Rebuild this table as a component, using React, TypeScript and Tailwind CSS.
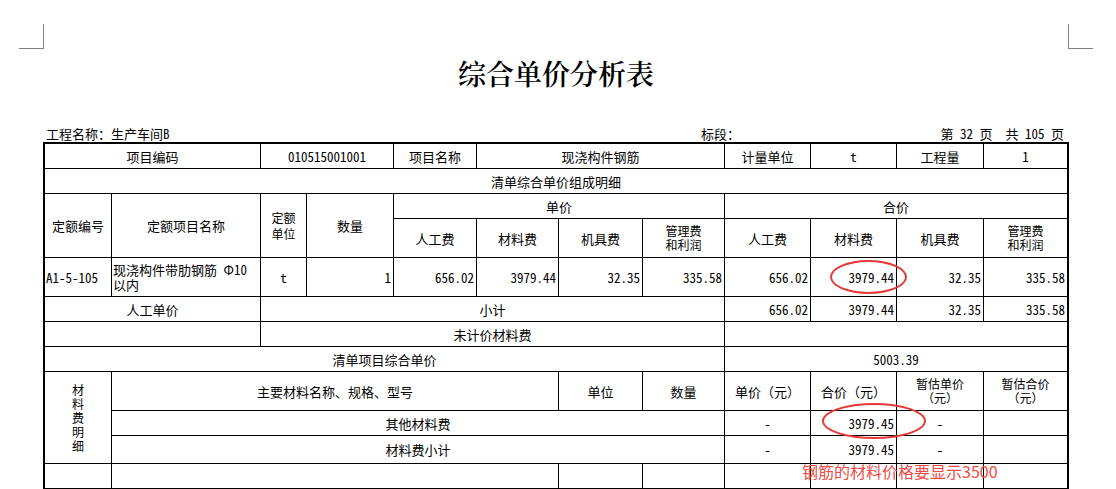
import type { ReactNode } from 'react';

const song = "font-['Noto_Sans_Mono_CJK_SC','Noto_Sans_CJK_SC',monospace]";

type Align = 'c' | 'r' | 'l';

function C({ children, a = 'c', cls = '' }: { children?: ReactNode; a?: Align; cls?: string }) {
	const al =
		a === 'r'
			? 'justify-end pr-[2px] text-right'
			: a === 'l'
				? 'justify-start pl-[1px] text-left'
				: 'justify-center text-center';
	return <div className={`flex items-center bg-white ${al} ${cls}`}>{children}</div>;
}

// two stacked lines, kept a touch smaller so the rows don't touch
function Two({ top, bottom, gap = 'leading-[14px]' }: { top: string; bottom: string; gap?: string }) {
	return (
		<div className={`flex flex-col items-center text-[12px] ${gap}`}>
			<span>{top}</span>
			<span>{bottom}</span>
		</div>
	);
}

const feeHeads = (
	<>
		<C>人工费</C>
		<C>材料费</C>
		<C>机具费</C>
		<C>
			<Two top="管理费" bottom="和利润" />
		</C>
	</>
);

const fees = ['656.02', '3979.44', '32.35', '335.58'];

export default function App() {
	return (
		<div className={`h-[489px] w-[1116px] overflow-hidden bg-white pt-[24px] text-black ${song}`}>
			{/* crop marks */}
			<div className="flex h-[25px]">
				<div className="ml-[19px] h-[25px] w-[25px] border-r border-b border-[#808080]" />
				<div className="mr-[23px] ml-auto h-[25px] w-[25px] border-b border-l border-[#808080]" />
			</div>

			<h1 className="mt-[10px] ml-[43px] h-[28px] w-[1026px] text-center font-['Noto_Serif_CJK_SC','Noto_Sans_CJK_SC',serif] text-[28px] leading-[28px] font-semibold">
				综合单价分析表
			</h1>

			<div className="mt-[38px] ml-[43px] flex h-[17px] w-[1026px] text-[13px] leading-[17px]">
				<span className="w-[658px] pl-[3px]">工程名称：生产车间B</span>
				<span>标段：</span>
				<span className="ml-auto pr-[5px] whitespace-pre">第 32 页  共 105 页</span>
			</div>

			<div className="relative ml-[43px] w-[1026px]">
				<div className="grid grid-cols-[66px_148px_45px_86px_82px_81px_83px_81px_85px_85px_86px_83px] grid-rows-[24px_24px_24px_38px_38px_24px_24px_24px_38px_24px_27px_24px] gap-px border-x-2 border-t-2 border-b border-black bg-black text-[13px] leading-[13px]">
					{/* 1 */}
					<C cls="col-span-2">项目编码</C>
					<C cls="col-span-2">010515001001</C>
					<C>项目名称</C>
					<C cls="col-span-3">现浇构件钢筋</C>
					<C>计量单位</C>
					<C>t</C>
					<C>工程量</C>
					<C>1</C>

					{/* 2 */}
					<C cls="col-span-12">清单综合单价组成明细</C>

					{/* 3-4 */}
					<C cls="row-span-2">定额编号</C>
					<C cls="row-span-2">定额项目名称</C>
					<C cls="row-span-2">
						<Two top="定额" bottom="单位" gap="leading-[16px]" />
					</C>
					<C cls="row-span-2">数量</C>
					<C cls="col-span-4">单价</C>
					<C cls="col-span-4">合价</C>
					{feeHeads}
					{feeHeads}

					{/* 5 */}
					<C a="l">A1-5-105</C>
					<C a="l">
						<div className="flex flex-col text-[13px] leading-[15px]">
							<span>现浇构件带肋钢筋 Φ10</span>
							<span>以内</span>
						</div>
					</C>
					<C>t</C>
					<C a="r">1</C>
					{fees.map((f) => (
						<C key={'u' + f} a="r">
							{f}
						</C>
					))}
					{fees.map((f) => (
						<C key={'t' + f} a="r">
							{f}
						</C>
					))}

					{/* 6 */}
					<C cls="col-span-2">人工单价</C>
					<C cls="col-span-6">小计</C>
					{fees.map((f) => (
						<C key={'s' + f} a="r">
							{f}
						</C>
					))}

					{/* 7 */}
					<C cls="col-span-2" />
					<C cls="col-span-6">未计价材料费</C>
					<C cls="col-span-4" />

					{/* 8 */}
					<C cls="col-span-8">清单项目综合单价</C>
					<C cls="col-span-4">5003.39</C>

					{/* 9-11 */}
					<C cls="row-span-3">
						<div className="flex flex-col items-center text-[12px] leading-[14px]">
							{['材', '料', '费', '明', '细'].map((ch) => (
								<span key={ch}>{ch}</span>
							))}
						</div>
					</C>
					<C cls="col-span-5">主要材料名称、规格、型号</C>
					<C>单位</C>
					<C>数量</C>
					<C>单价（元）</C>
					<C>合价（元）</C>
					<C>
						<Two top="暂估单价" bottom="（元）" />
					</C>
					<C>
						<Two top="暂估合价" bottom="（元）" />
					</C>

					<C cls="col-span-7">其他材料费</C>
					<C>-</C>
					<C a="r">3979.45</C>
					<C>-</C>
					<C />

					<C cls="col-span-7">材料费小计</C>
					<C>-</C>
					<C a="r">3979.45</C>
					<C>-</C>
					<C />

					{/* 12 */}
					<C />
					<C cls="col-span-5" />
					<C />
					<C />
					<C />
					<C />
					<C />
					<C />
				</div>

				{/* annotations */}
				<div className="absolute top-[118px] left-[787px] h-[34px] w-[77px] rounded-[50%] border-2 border-[#e53a35]" />
				<div className="absolute top-[261px] left-[779px] h-[36px] w-[104px] rounded-[50%] border-2 border-[#e53a35]" />
				<div className="absolute top-[321px] left-[759px] font-['Noto_Sans_CJK_SC',sans-serif] text-[16px] leading-[16px] whitespace-nowrap text-[#f04a44]">
					钢筋的材料价格要显示3500
				</div>
			</div>
		</div>
	);
}
